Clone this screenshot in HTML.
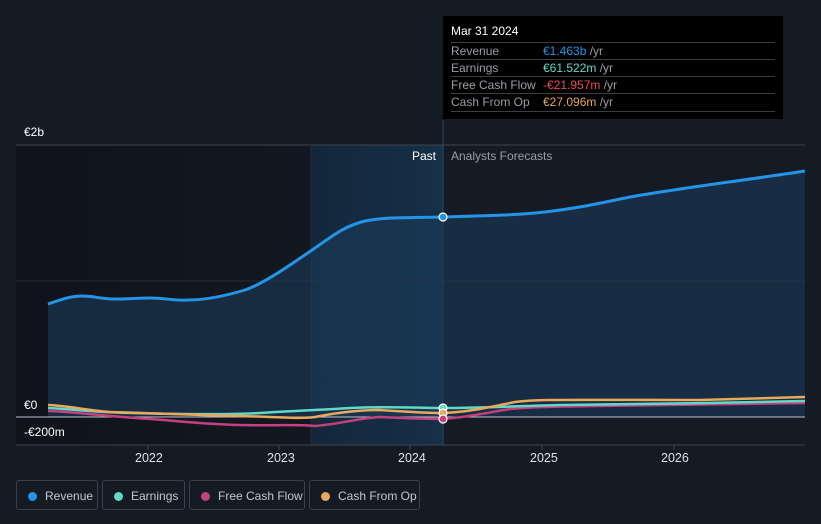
<!DOCTYPE html>
<html><head><style>
body{margin:0;background:#151b25;width:821px;height:524px;overflow:hidden;font-family:"Liberation Sans",sans-serif;}
.tt{position:absolute;left:443px;top:16px;width:340px;height:103px;background:#000;color:#fff;font-size:12px;}
.tt .h{position:absolute;left:8px;top:8px;}
.tt .r{position:absolute;left:8px;width:324px;border-top:1px solid #3a3d42;height:17px;line-height:17px;color:#9a9ea5;}
.tt .r span{position:absolute;left:92px;}
.lg{position:absolute;top:480px;height:30px;border:1px solid #3b404a;border-radius:3px;color:#c4c7cc;font-size:12px;line-height:30px;box-sizing:border-box;white-space:nowrap;}
.lg i{position:absolute;left:11px;top:11px;width:9px;height:9px;border-radius:50%;}
.lg b{font-weight:normal;position:absolute;left:28px;white-space:nowrap;}
</style></head><body>
<svg width="821" height="524" style="position:absolute;left:0;top:0">
<defs>
<linearGradient id="pd" x1="0" x2="1"><stop offset="0" stop-color="#0e1116" stop-opacity=".8"/><stop offset="1" stop-color="#0e1116" stop-opacity=".3"/></linearGradient>
<linearGradient id="hl" x1="0" x2="1"><stop offset="0" stop-color="#14273a"/><stop offset="1" stop-color="#153049"/></linearGradient>
</defs>
<rect x="16" y="145" width="295" height="300" fill="url(#pd)"/>
<rect x="311" y="145" width="132" height="300" fill="url(#hl)"/>
<line x1="16" y1="145" x2="805" y2="145" stroke="#3f444c"/>
<line x1="16" y1="281" x2="805" y2="281" stroke="#262b33"/>
<line x1="443" y1="120" x2="443" y2="445" stroke="#2c4763"/>
<line x1="311" y1="145" x2="311" y2="445" stroke="#1f2d3c"/>
<path d="M48,304 C60,300 70,296 82,296 C95,296 100,299 115,299 C130,299 140,298 150,298 C165,298 175,301 188,300 C205,300 225,296 245,290 C265,283 290,265 315,248 C335,234 345,226 365,221 C385,217 400,218 443,217 C480,216 520,215 545,212 C580,208 600,203 630,197 C680,188 740,181 805,171 L805,417 L48,417 Z" fill="#1a3a58" fill-opacity=".6"/>
<path d="M48,304 C60,300 70,296 82,296 C95,296 100,299 115,299 C130,299 140,298 150,298 C165,298 175,301 188,300 C205,300 225,296 245,290 C265,283 290,265 315,248 C335,234 345,226 365,221 C385,217 400,218 443,217 C480,216 520,215 545,212 C580,208 600,203 630,197 C680,188 740,181 805,171" fill="none" stroke="#2394e6" stroke-width="3"/>
<line x1="16" y1="417" x2="805" y2="417" stroke="#bfc3c8" stroke-width="1"/>
<line x1="16" y1="445" x2="805" y2="445" stroke="#3f444c"/>
<path d="M48,411 C80,412 100,416 150,419 C180,421 200,424 240,425 C280,426 300,424 315,426 C340,424 360,418 380,417 C400,418 420,419 443,419 C470,417 490,412 510,409 C540,406 600,406 805,403" fill="none" stroke="#c4407e" stroke-width="2.5"/>
<path d="M48,408 C70,409 90,412 130,413 C170,414 230,415 260,413 C290,411 320,410 350,408 C380,406 420,408 443,408 C480,408 520,406 560,405 C650,404 720,403 805,401" fill="none" stroke="#5fd9c8" stroke-width="2.5"/>
<path d="M48,405 C70,406 85,410 110,412 C150,413 190,415 240,416 C280,417 300,419 315,417 C335,413 360,410 380,410 C410,412 430,413 443,413 C470,412 490,407 515,402 C540,399 560,400 700,400 C740,399 770,398 805,397" fill="none" stroke="#e9a95b" stroke-width="2.5"/>
<circle cx="443" cy="217" r="4" fill="#2394e6" stroke="#fff" stroke-width="1.2"/>
<circle cx="443" cy="408" r="4" fill="#5fd9c8" stroke="#fff" stroke-width="1.2"/>
<circle cx="443" cy="413" r="4" fill="#e9a95b" stroke="#fff" stroke-width="1.2"/>
<circle cx="443" cy="419" r="4" fill="#c4407e" stroke="#fff" stroke-width="1.2"/>
<g fill="#fff" font-size="12" font-family="Liberation Sans,sans-serif">
<text x="24" y="136">€2b</text>
<text x="24" y="409">€0</text>
<text x="24" y="436">-€200m</text>
<text x="412" y="160">Past</text>
<text x="451" y="160" fill="#9a9ea5">Analysts Forecasts</text>
<g font-size="12.5" fill="#e0e2e5"><text x="135" y="462">2022</text><text x="267" y="462">2023</text><text x="398" y="462">2024</text><text x="530" y="462">2025</text><text x="661" y="462">2026</text></g>
</g>
<g stroke="#3f444c"><line x1="148" y1="445" x2="148" y2="450"/><line x1="279" y1="445" x2="279" y2="450"/><line x1="410" y1="445" x2="410" y2="450"/><line x1="542" y1="445" x2="542" y2="450"/><line x1="674" y1="445" x2="674" y2="450"/></g>
</svg>
<div class="tt"><div class="h">Mar 31 2024</div>
<div class="r" style="top:26px">Revenue<span style="color:#2394e6">€1.463b <em style="color:#9a9ea5;font-style:normal">/yr</em></span></div>
<div class="r" style="top:43px">Earnings<span style="color:#5fd9c8">€61.522m <em style="color:#9a9ea5;font-style:normal">/yr</em></span></div>
<div class="r" style="top:60px">Free Cash Flow<span style="color:#ef4b4b">-€21.957m <em style="color:#9a9ea5;font-style:normal">/yr</em></span></div>
<div class="r" style="top:77px;border-bottom:1px solid #3a3d42">Cash From Op<span style="color:#e9a95b">€27.096m <em style="color:#9a9ea5;font-style:normal">/yr</em></span></div>
</div>
<div class="lg" style="left:16px;width:82px"><i style="background:#2394e6"></i><b>Revenue</b></div>
<div class="lg" style="left:102px;width:83px"><i style="background:#5fd9c8"></i><b>Earnings</b></div>
<div class="lg" style="left:189px;width:116px"><i style="background:#c4407e"></i><b>Free Cash Flow</b></div>
<div class="lg" style="left:309px;width:111px"><i style="background:#e9a95b"></i><b>Cash From Op</b></div>
</body></html>
